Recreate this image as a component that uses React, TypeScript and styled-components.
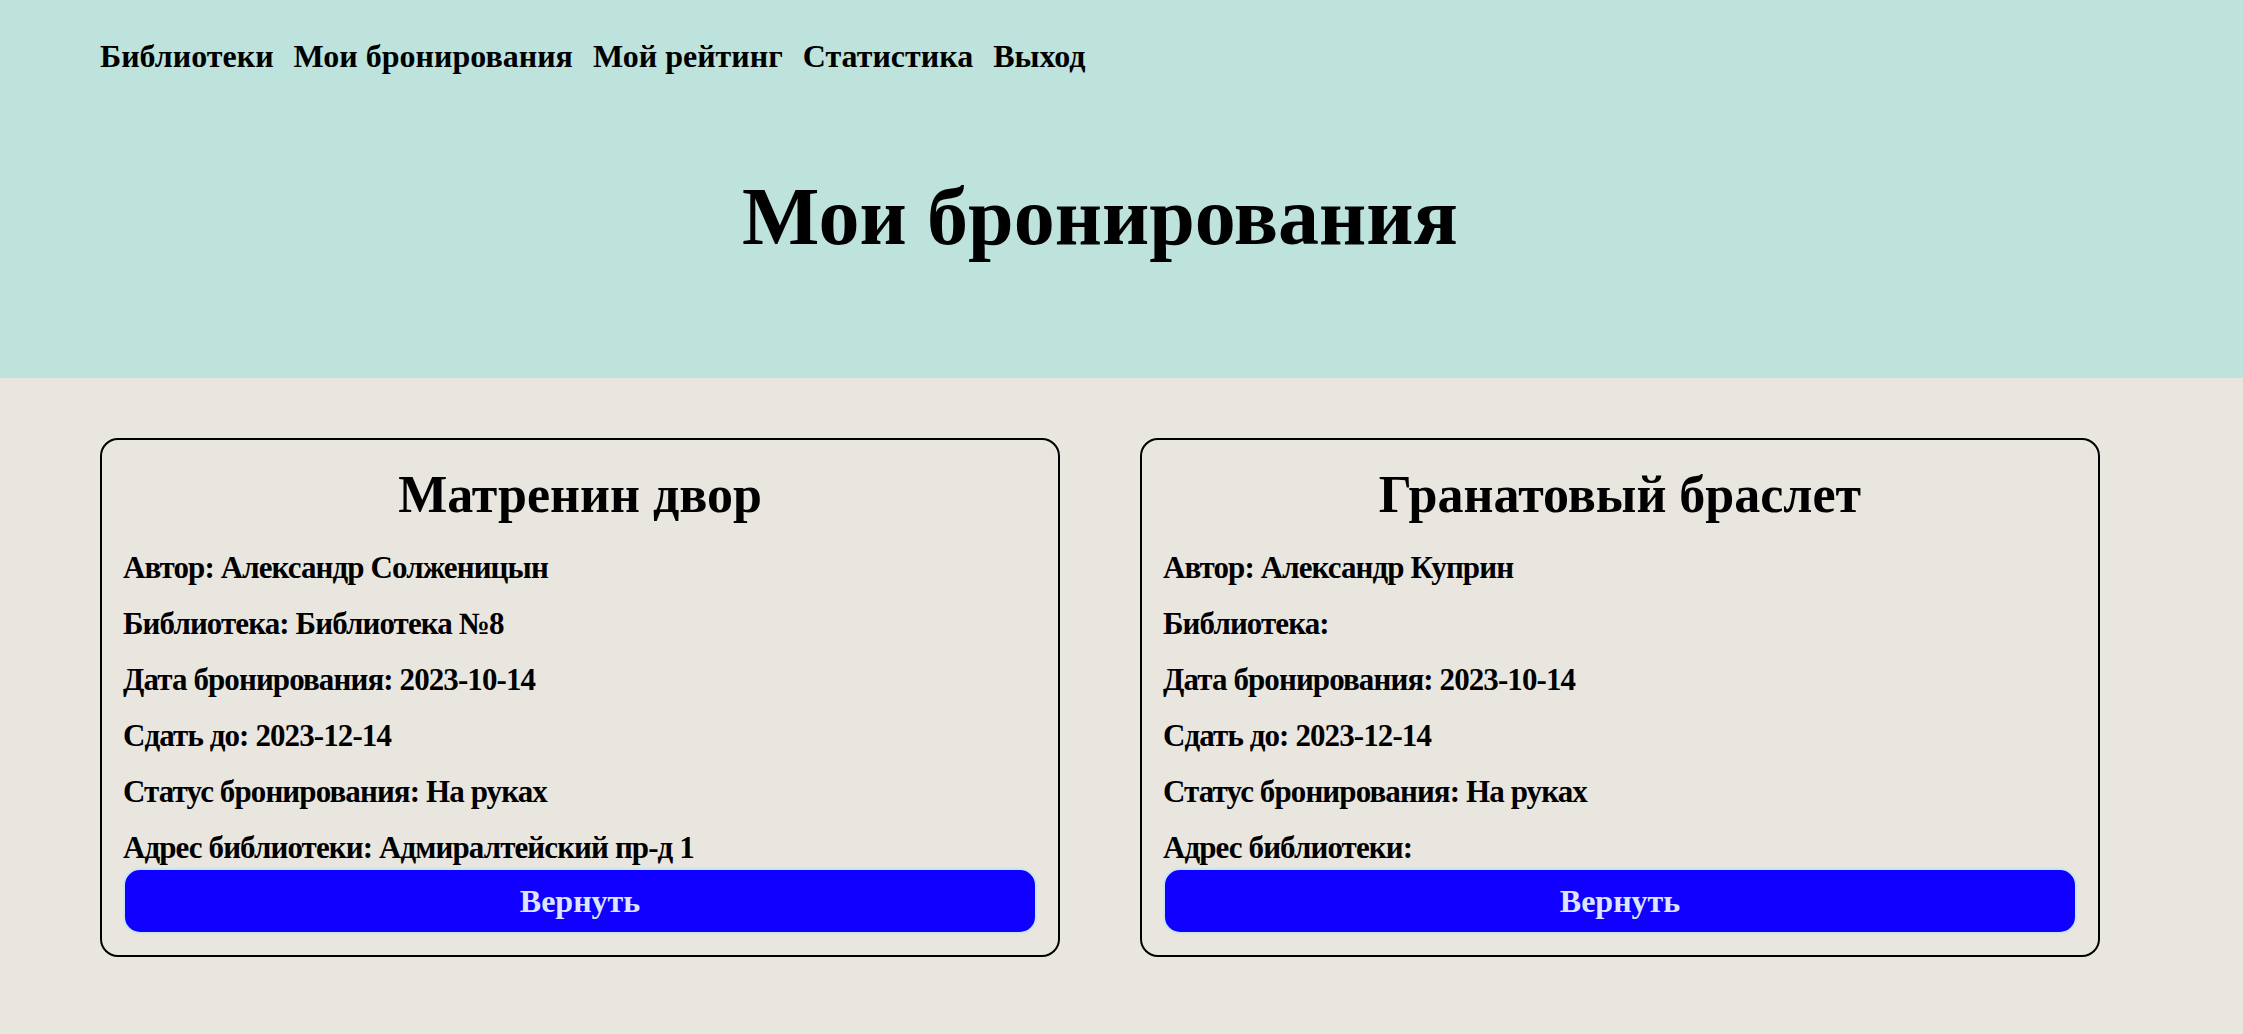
import React from "react";
import styled, { createGlobalStyle } from "styled-components";

const GlobalStyle = createGlobalStyle`
    html, body {
        margin: 0;
        padding: 0;
        background-color: #e9e6e0;
    }
    body {
        font-family: "Liberation Serif", "Times New Roman", serif;
        font-weight: bold;
        color: #000000;
    }
`;

const Header = styled.header`
    background-color: #bde3dc;
    height: 378px;
    display: flex;
    flex-direction: column;
`;

const Nav = styled.nav`
    display: flex;
    gap: 20px;
    padding: 38px 0 0 100px;
`;

const NavLink = styled.a`
    font-size: 32px;
    line-height: 36px;
    color: #000000;
    text-decoration: none;
    cursor: pointer;
`;

const PageTitle = styled.h1`
    width: 2000px;
    margin: 102px 0 0 100px;
    font-size: 82px;
    line-height: 82px;
    text-align: center;
`;

const Main = styled.main`
    padding: 60px 0 60px 100px;
`;

const Grid = styled.div`
    display: grid;
    grid-template-columns: 960px 960px;
    gap: 80px;
`;

const Card = styled.div`
    display: flex;
    flex-direction: column;
    border: 2px solid #000000;
    border-radius: 18px;
    padding: 25px 21px 21px;
`;

const BookName = styled.h2`
    margin: 0 0 25px;
    font-size: 52px;
    line-height: 60px;
    text-align: center;
`;

const Rows = styled.div`
    display: flex;
    flex-direction: column;
    gap: 20px;
`;

const Row = styled.p`
    margin: 0;
    font-size: 31px;
    line-height: 36px;
    letter-spacing: -0.9px;
`;

const ReturnButton = styled.button`
    box-sizing: border-box;
    margin-top: 2px;
    height: 66px;
    border: 2px solid #c9e6ef;
    border-radius: 17px;
    background-color: #1000ff;
    color: #dde4ff;
    font-family: inherit;
    font-weight: bold;
    font-size: 32px;
    cursor: pointer;
`;

type Booking = {
    title: string;
    author: string;
    library: string;
    bookedAt: string;
    dueDate: string;
    status: string;
    address: string;
};

const bookings: Booking[] = [
    {
        title: "Матренин двор",
        author: "Александр Солженицын",
        library: "Библиотека №8",
        bookedAt: "2023-10-14",
        dueDate: "2023-12-14",
        status: "На руках",
        address: "Адмиралтейский пр-д 1",
    },
    {
        title: "Гранатовый браслет",
        author: "Александр Куприн",
        library: "",
        bookedAt: "2023-10-14",
        dueDate: "2023-12-14",
        status: "На руках",
        address: "",
    },
];

function BookingCard({ booking }: { booking: Booking }) {
    return (
        <Card>
            <BookName>{booking.title}</BookName>
            <Rows>
                <Row>Автор: {booking.author}</Row>
                <Row>Библиотека: {booking.library}</Row>
                <Row>Дата бронирования: {booking.bookedAt}</Row>
                <Row>Сдать до: {booking.dueDate}</Row>
                <Row>Статус бронирования: {booking.status}</Row>
                <Row>Адрес библиотеки: {booking.address}</Row>
            </Rows>
            <ReturnButton>Вернуть</ReturnButton>
        </Card>
    );
}

export default function App() {
    return (
        <>
            <GlobalStyle />
            <Header>
                <Nav>
                    <NavLink>Библиотеки</NavLink>
                    <NavLink>Мои бронирования</NavLink>
                    <NavLink>Мой рейтинг</NavLink>
                    <NavLink>Статистика</NavLink>
                    <NavLink>Выход</NavLink>
                </Nav>
                <PageTitle>Мои бронирования</PageTitle>
            </Header>
            <Main>
                <Grid>
                    {bookings.map((b) => (
                        <BookingCard key={b.title} booking={b} />
                    ))}
                </Grid>
            </Main>
        </>
    );
}
